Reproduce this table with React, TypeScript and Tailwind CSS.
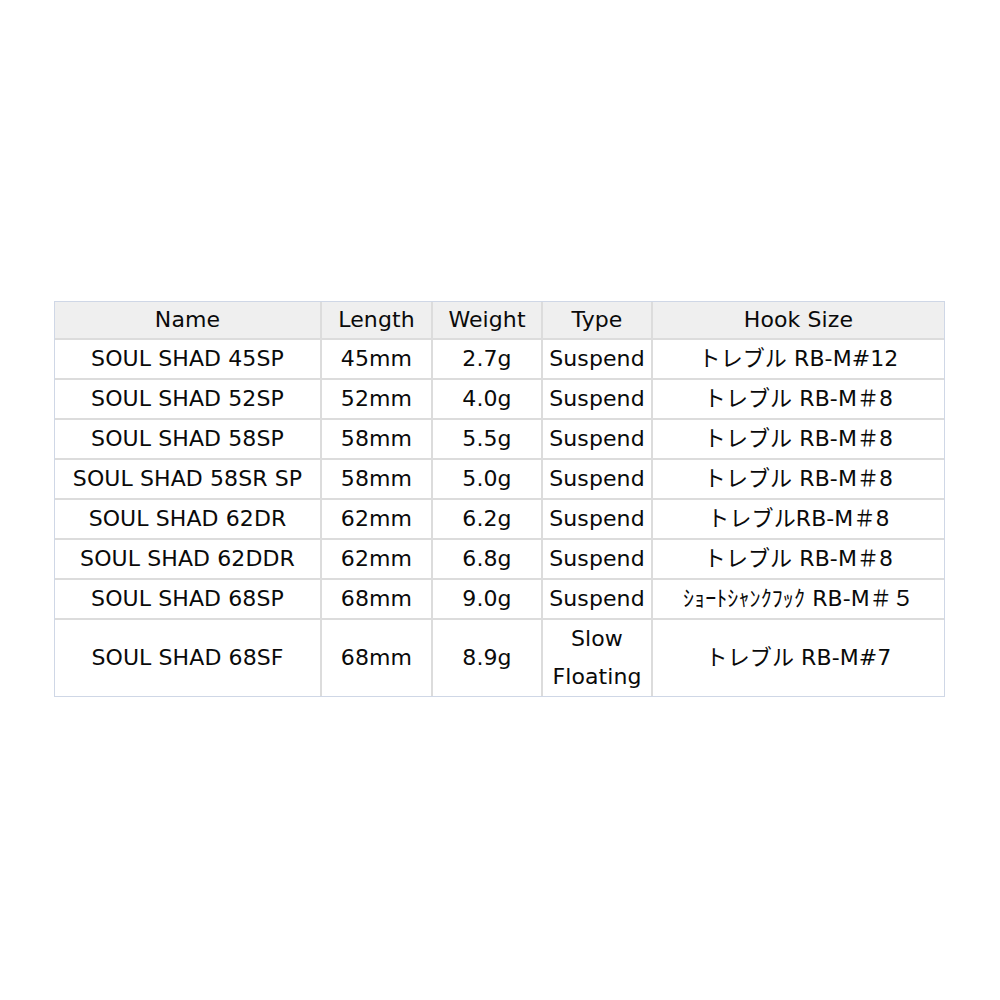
const rows: { name: string; len: string; weight: string; type: string; hook: string; tall?: boolean }[] = [
  { name: 'SOUL SHAD 45SP', len: '45mm', weight: '2.7g', type: 'Suspend', hook: 'トレブル RB-M#12' },
  { name: 'SOUL SHAD 52SP', len: '52mm', weight: '4.0g', type: 'Suspend', hook: 'トレブル RB-M＃8' },
  { name: 'SOUL SHAD 58SP', len: '58mm', weight: '5.5g', type: 'Suspend', hook: 'トレブル RB-M＃8' },
  { name: 'SOUL SHAD 58SR SP', len: '58mm', weight: '5.0g', type: 'Suspend', hook: 'トレブル RB-M＃8' },
  { name: 'SOUL SHAD 62DR', len: '62mm', weight: '6.2g', type: 'Suspend', hook: 'トレブルRB-M＃8' },
  { name: 'SOUL SHAD 62DDR', len: '62mm', weight: '6.8g', type: 'Suspend', hook: 'トレブル RB-M＃8' },
  { name: 'SOUL SHAD 68SP', len: '68mm', weight: '9.0g', type: 'Suspend', hook: 'ｼｮｰﾄｼｬﾝｸﾌｯｸ RB-M＃５' },
  { name: 'SOUL SHAD 68SF', len: '68mm', weight: '8.9g', type: 'Slow Floating', hook: 'トレブル RB-M#7', tall: true },
];

const cell = 'border-2 border-[#dcdcdc] text-center align-middle px-0 py-0';

export default function App() {
  return (
    <div className="w-[1000px] h-[1000px] bg-white pt-[301px] pl-[54px]">
      <div className="w-[891px] border border-[#cfd7e6]">
        <table
          className="w-full border-collapse table-fixed text-[#0a0a0a] text-[22px] leading-none tracking-[0.1px]"
          style={{ fontFamily: '"DejaVu Sans", "Noto Sans CJK JP", sans-serif' }}
        >
          <colgroup>
            <col className="w-[266px]" />
            <col className="w-[111px]" />
            <col className="w-[110px]" />
            <col className="w-[110px]" />
            <col />
          </colgroup>
          <thead>
            <tr className="bg-[#efefef] h-[37px]">
              <th className={cell + ' font-normal border-t-0 border-l-0'}>Name</th>
              <th className={cell + ' font-normal border-t-0'}>Length</th>
              <th className={cell + ' font-normal border-t-0'}>Weight</th>
              <th className={cell + ' font-normal border-t-0'}>Type</th>
              <th className={cell + ' font-normal border-t-0 border-r-0'}>Hook Size</th>
            </tr>
          </thead>
          <tbody>
            {rows.map((r) => (
              <tr key={r.name} className={r.tall ? 'h-[77px]' : 'h-[40px]'}>
                <td className={cell + ' border-l-0 whitespace-nowrap' + (r.tall ? ' border-b-0' : '')}>{r.name}</td>
                <td className={cell + (r.tall ? ' border-b-0' : '')}>{r.len}</td>
                <td className={cell + (r.tall ? ' border-b-0' : '')}>{r.weight}</td>
                <td className={cell + (r.tall ? ' border-b-0 leading-[38px]' : '')}>{r.type}</td>
                <td className={cell + ' border-r-0 whitespace-nowrap' + (r.tall ? ' border-b-0' : '')}>{r.hook}</td>
              </tr>
            ))}
          </tbody>
        </table>
      </div>
    </div>
  );
}
